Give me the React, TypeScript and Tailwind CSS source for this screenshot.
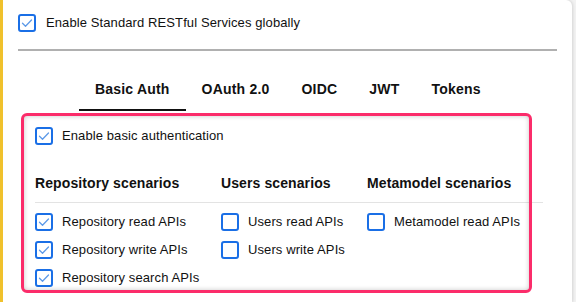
import React from "react";

function Box({ checked }: { checked?: boolean }) {
  return (
    <span className="flex h-[18px] w-[18px] shrink-0 items-center justify-center rounded-[3px] border-2 border-[#1a6fe6] bg-white">
      {checked && (
        <svg width="14" height="14" viewBox="0 0 14 14" fill="none">
          <polyline points="2.5,7.2 5.5,10.2 11.5,4" stroke="#5d9ae8" strokeWidth="1.3" strokeLinecap="round" strokeLinejoin="round" />
        </svg>
      )}
    </span>
  );
}

function Item({ label, checked }: { label: string; checked?: boolean }) {
  return (
    <div className="flex h-[18px] items-center gap-[9px]">
      <Box checked={checked} />
      <span className="text-[13px] leading-[18px] tracking-[0.1px] text-[#111]">{label}</span>
    </div>
  );
}

export default function App() {
  const tabs = ["Basic Auth", "OAuth 2.0", "OIDC", "JWT", "Tokens"];
  return (
    <div className="flex h-[302px] w-[576px] overflow-hidden bg-[#f2f2f2]" style={{ fontFamily: '"Liberation Sans", Arial, sans-serif' }}>
      <div className="relative h-full w-[572px] rounded-tr-[6px] border-l-[3px] border-[#f0c12c] bg-white shadow-[1px_0_3px_rgba(0,0,0,0.12)]">
        <div className="pl-[15px] pr-[15px] pt-[14px]">
          <div className="flex items-center gap-[10px]">
            <Box checked />
            <span className="text-[13px] leading-[18px] tracking-[0.1px] text-[#111]">Enable Standard RESTful Services globally</span>
          </div>
          <div className="mt-[17px] h-[2px] bg-[#b0b0b0]" />
        </div>
        <div className="mt-[18px] flex pl-[76px]">
          {tabs.map((t, i) => (
            <div
              key={t}
              className={`px-4 pt-[10px] pb-[10px] text-[14px] font-bold leading-[20px] tracking-[0.2px] text-[#111] ${i === 0 ? "border-b-2 border-[#111]" : "border-b-2 border-transparent"}`}
            >
              {t}
            </div>
          ))}
        </div>
        <div className="pl-[32px] pt-[16px]">
          <Item label="Enable basic authentication" checked />
          <div className="mt-[28px] flex w-[508px] text-[14px] font-bold leading-[20px] tracking-[0.1px] text-[#111]">
            <div className="w-[186px]">Repository scenarios</div>
            <div className="w-[146px]">Users scenarios</div>
            <div>Metamodel scenarios</div>
          </div>
          <div className="mt-[9px] h-px w-[508px] bg-[#e3e3e3]" />
          <div className="mt-[10px] flex">
            <div className="flex w-[186px] flex-col gap-[10px]">
              <Item label="Repository read APIs" checked />
              <Item label="Repository write APIs" checked />
              <Item label="Repository search APIs" checked />
            </div>
            <div className="flex w-[146px] flex-col gap-[10px]">
              <Item label="Users read APIs" />
              <Item label="Users write APIs" />
            </div>
            <div className="flex flex-col gap-[10px]">
              <Item label="Metamodel read APIs" />
            </div>
          </div>
        </div>
        <div className="pointer-events-none absolute left-[18px] top-[113px] h-[180px] w-[511px] rounded-[6px] border-[3px] border-[#fb2c6a] shadow-[inset_0_0_5px_rgba(0,0,0,0.22)]" />
      </div>
    </div>
  );
}
